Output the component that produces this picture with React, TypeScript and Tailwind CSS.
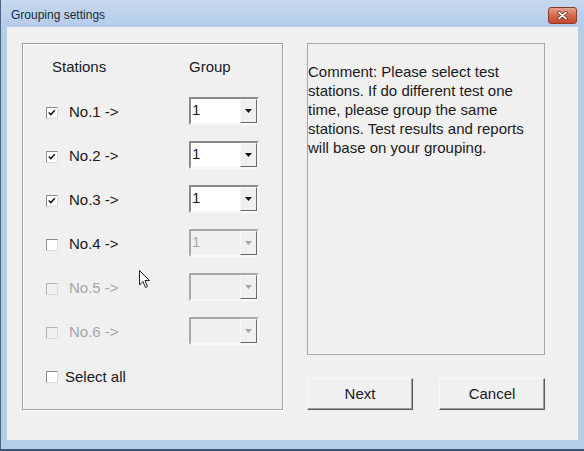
import React from "react";

const font = { fontFamily: '"Liberation Sans", Arial, sans-serif' } as const;

function Check({ checked, disabled }: { checked?: boolean; disabled?: boolean }) {
  return (
    <div
      className={`relative w-[12px] h-[12px] border border-t-[#8c8c8c] border-l-[#8c8c8c] border-b-[#dcdcdc] border-r-[#dcdcdc] ${
        disabled ? "bg-[#f0f0f0] border-t-[#b4b4b4] border-l-[#b4b4b4]" : "bg-white"
      }`}
    >
      {checked && (
        <svg viewBox="0 0 10 10" className="absolute left-[1px] top-[1px] w-[8px] h-[8px]">
          <path d="M1 4.5 L3.5 7 L8.5 1.5" fill="none" stroke="#111" strokeWidth="1.8" />
        </svg>
      )}
    </div>
  );
}

function Combo({ value, disabled }: { value?: string; disabled?: boolean }) {
  return (
    <div
      className={`flex w-[70px] h-[28px] border-2 border-t-[#8a8a8a] border-l-[#8a8a8a] border-b-[#f8f8f8] border-r-[#f8f8f8] ${
        disabled ? "bg-[#f0f0f0] border-t-[#a8a8a8] border-l-[#a8a8a8]" : "bg-white"
      }`}
    >
      <div className={`flex-1 flex items-center pl-[1px] text-[15px] ${disabled ? "text-[#a6a6a6]" : "text-[#1a1a1a]"}`}>
        {value}
      </div>
      <div className="w-[17px] h-full bg-[#f0f0f0] border border-t-[#f8f8f8] border-l-[#f8f8f8] border-b-[#6a6a6a] border-r-[#6a6a6a] flex items-center justify-center">
        <svg viewBox="0 0 7 4" className="w-[7px] h-[4px]">
          <path d="M0 0 H7 L3.5 4 Z" fill={disabled ? "#a6a6a6" : "#111"} />
        </svg>
      </div>
    </div>
  );
}

function Row({ n, checked, disabled, comboValue, comboDisabled }: { n: number; checked?: boolean; disabled?: boolean; comboValue?: string; comboDisabled?: boolean }) {
  return (
    <div className="flex items-center h-[44px]">
      <div className="w-[23px] flex items-center pt-[3px]">
        <Check checked={checked} disabled={disabled} />
      </div>
      <div className={`w-[120px] text-[15px] pt-[3px] ${disabled ? "text-[#a6a6a6]" : "text-[#1a1a1a]"}`}>No.{n} -&gt;</div>
      <div className="pb-[1px]">
        <Combo value={comboValue} disabled={comboDisabled} />
      </div>
    </div>
  );
}

export default function App() {
  return (
    <div className="w-[584px] h-[451px] bg-[#b4cde8] flex flex-col relative overflow-hidden" style={font}>
      <div className="absolute left-0 top-0 bottom-0 w-[1px] bg-[#4a6584]" />
      <div className="absolute left-0 right-0 bottom-0 h-[2px] bg-[#3d5675]" />
      <div className="h-[27px] flex items-center bg-gradient-to-b from-[#c6d9ee] to-[#b3cce8] pl-[11px] pr-[7px]">
        <div className="text-[12px] text-[#1e2a3a] flex-1 pt-[2px]">Grouping settings</div>
        <div className="w-[29px] h-[17px] mt-[3px] rounded-[3px] border border-[#8a3b2a] bg-gradient-to-b from-[#e5a28d] via-[#d46a4b] to-[#c44a2c] flex items-center justify-center">
          <svg viewBox="0 0 12 10" className="w-[11px] h-[9px]">
            <path d="M2 1.5 L10 8.5 M10 1.5 L2 8.5" stroke="#5a2418" strokeWidth="3.4" strokeLinecap="round" />
            <path d="M2 1.5 L10 8.5 M10 1.5 L2 8.5" stroke="#ffffff" strokeWidth="2" strokeLinecap="round" />
          </svg>
        </div>
      </div>
      <div className="ml-[7px] mr-[6px] h-[413px] bg-[#f0f0f0] flex pl-[15px] pt-[16px]">
        <div className="w-[261px] h-[367px] border border-[#a0a0a0] shadow-[inset_1px_1px_0_#ffffff,1px_1px_0_#ffffff] pl-[23px] pt-[12px] flex flex-col">
          <div className="flex h-[23px] items-center text-[15px] text-[#1a1a1a]">
            <div className="w-[143px] pl-[6px]">Stations</div>
            <div>Group</div>
          </div>
          <div className="h-[10px]" />
          <Row n={1} checked comboValue="1" />
          <Row n={2} checked comboValue="1" />
          <Row n={3} checked comboValue="1" />
          <Row n={4} comboValue="1" comboDisabled />
          <Row n={5} disabled comboDisabled />
          <Row n={6} disabled comboDisabled />
          <div className="flex items-center h-[48px]">
            <div className="w-[19px] flex items-center">
              <Check />
            </div>
            <div className="text-[15px] text-[#1a1a1a]">Select all</div>
          </div>
        </div>
        <div className="ml-[24px] w-[238px] flex flex-col">
          <div className="h-[312px] border border-[#a8a8a8] pt-[18px] pr-[4px] text-[15px] leading-[19px] text-[#1a1a1a]">
            Comment: Please select test stations. If do different test one time, please group the same stations. Test results and reports will base on your grouping.
          </div>
          <div className="flex mt-[23px] gap-[26px]">
            <button className="w-[106px] h-[32px] bg-[#f0f0f0] border border-t-[#f8f8f8] border-l-[#f8f8f8] border-b-[#5a5a5a] border-r-[#5a5a5a] shadow-[inset_-1px_-1px_0_#a0a0a0] text-[15px] text-[#1a1a1a]">
              Next
            </button>
            <button className="w-[106px] h-[32px] bg-[#f0f0f0] border border-t-[#f8f8f8] border-l-[#f8f8f8] border-b-[#5a5a5a] border-r-[#5a5a5a] shadow-[inset_-1px_-1px_0_#a0a0a0] text-[15px] text-[#1a1a1a]">
              Cancel
            </button>
          </div>
        </div>
      </div>
      <svg viewBox="0 0 12 19" className="absolute left-[139px] top-[270px] w-[12px] h-[19px]">
        <path d="M0.5 0.5 L0.5 15 L4 11.5 L6.5 17.5 L8.5 16.5 L6 10.5 L10.5 10.5 Z" fill="#ffffff" stroke="#222" strokeWidth="1" />
      </svg>
    </div>
  );
}
